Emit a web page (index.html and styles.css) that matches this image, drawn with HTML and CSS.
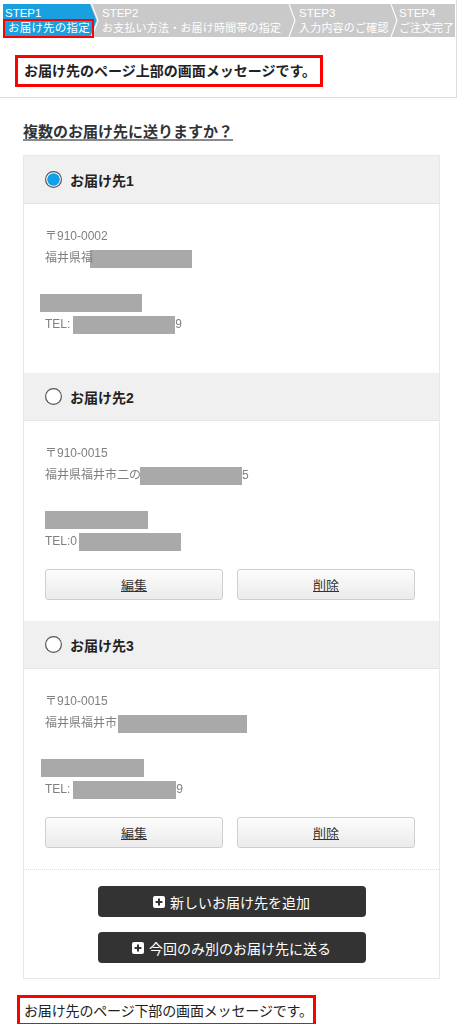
FILE: index.html
```html
<!DOCTYPE html>
<html lang="ja">
<head>
<meta charset="utf-8">
<title>お届け先の指定</title>
<link rel="stylesheet" href="styles.css">
</head>
<body>
<header class="top">
  <ol class="steps">
    <li class="step step-current"><span class="step-no">STEP1</span><span class="step-name">お届け先の指定</span></li>
    <li class="sep-wrap"><svg class="sep" width="9" height="33" viewBox="0 0 9 33"><polygon points="0,0 6.5,16.5 0,33" fill="#1a9fe0"/><polyline points="1.6,0 8,16.5 1.6,33" fill="none" stroke="#fff" stroke-width="1.1"/></svg></li>
    <li class="step step-2"><span class="step-no">STEP2</span><span class="step-name">お支払い方法・お届け時間帯の指定</span></li>
    <li class="sep-wrap"><svg class="sep" width="8" height="33" viewBox="0 0 8 33"><polyline points="1,0 7,16.5 1,33" fill="none" stroke="#fff" stroke-width="1.1"/></svg></li>
    <li class="step step-3"><span class="step-no">STEP3</span><span class="step-name">入力内容のご確認</span></li>
    <li class="sep-wrap"><svg class="sep" width="8" height="33" viewBox="0 0 8 33"><polyline points="1,0 7,16.5 1,33" fill="none" stroke="#fff" stroke-width="1.1"/></svg></li>
    <li class="step step-4"><span class="step-no">STEP4</span><span class="step-name">ご注文完了</span></li>
  </ol>
  <p class="msg msg-top">お届け先のページ上部の画面メッセージです。</p>
</header>

<main class="main">
  <h2 class="question"><span>複数のお届け先に送りますか？</span></h2>

  <section class="card">
    <div class="addr-head">
      <svg class="radio" width="17" height="17" viewBox="0 0 17 17"><circle cx="8.5" cy="8.5" r="7.9" fill="#fff" stroke="#555" stroke-width="1.2"/><circle cx="8.5" cy="8.5" r="6.3" fill="#12a0ea"/></svg>
      <span>お届け先1</span>
    </div>
    <div class="addr-body">
      <div class="addr">
        <p><span class="blur">〒910-0002</span></p>
        <p><span class="blur">福井県福</span><span class="redact r1a"></span></p>
        <p>&nbsp;</p>
        <p><span class="redact r1b"></span></p>
        <p><span class="blur">TEL:</span><span class="redact r1c"></span><span class="blur">9</span></p>
      </div>
    </div>

    <div class="addr-head">
      <svg class="radio" width="17" height="17" viewBox="0 0 17 17"><circle cx="8.5" cy="8.5" r="7.9" fill="#fff" stroke="#555" stroke-width="1.2"/></svg>
      <span>お届け先2</span>
    </div>
    <div class="addr-body">
      <div class="addr">
        <p><span class="blur">〒910-0015</span></p>
        <p><span class="blur">福井県福井市二の</span><span class="redact r2a"></span><span class="blur">5</span></p>
        <p>&nbsp;</p>
        <p><span class="redact r2b"></span></p>
        <p><span class="blur">TEL:0</span><span class="redact r2c"></span></p>
      </div>
      <div class="btn-row">
        <a class="btn-light" href="#">編集</a>
        <a class="btn-light" href="#">削除</a>
      </div>
    </div>

    <div class="addr-head">
      <svg class="radio" width="17" height="17" viewBox="0 0 17 17"><circle cx="8.5" cy="8.5" r="7.9" fill="#fff" stroke="#555" stroke-width="1.2"/></svg>
      <span>お届け先3</span>
    </div>
    <div class="addr-body">
      <div class="addr">
        <p><span class="blur">〒910-0015</span></p>
        <p><span class="blur">福井県福井市</span><span class="redact r3a"></span></p>
        <p>&nbsp;</p>
        <p><span class="redact r3b"></span></p>
        <p><span class="blur">TEL:</span><span class="redact r3c"></span><span class="blur">9</span></p>
      </div>
      <div class="btn-row">
        <a class="btn-light" href="#">編集</a>
        <a class="btn-light" href="#">削除</a>
      </div>
    </div>

    <div class="card-foot">
      <a class="btn-dark" href="#"><svg class="plus" width="12" height="12" viewBox="0 0 12 12"><rect width="12" height="12" rx="2" fill="#fff"/><path d="M6 2.6v6.8M2.6 6h6.8" stroke="#333" stroke-width="2"/></svg><span>新しいお届け先を追加</span></a>
      <a class="btn-dark" href="#"><svg class="plus" width="12" height="12" viewBox="0 0 12 12"><rect width="12" height="12" rx="2" fill="#fff"/><path d="M6 2.6v6.8M2.6 6h6.8" stroke="#333" stroke-width="2"/></svg><span>今回のみ別のお届け先に送る</span></a>
    </div>
  </section>
</main>

<p class="msg msg-bottom">お届け先のページ下部の画面メッセージです。</p>
</body>
</html>
```

FILE: styles.css
```css
body {
  margin: 0;
  font-family: "Liberation Sans", "Noto Sans CJK JP", sans-serif;
  color: #222;
  background: #fff;
}

.top {
  width: 457px;
  box-sizing: border-box;
  border-right: 1px solid #ddd;
  border-bottom: 1px solid #ddd;
  padding: 4px 0 10px;
  display: flex;
  flex-direction: column;
  align-items: flex-start;
}

.steps {
  display: flex;
  list-style: none;
  margin: 0 0 0 3px;
  padding: 0;
  height: 33px;
  width: 452px;
  background: #c9c9c9;
}

.step {
  display: flex;
  flex-direction: column;
  color: #fff;
  font-size: 11px;
  letter-spacing: 0.2px;
  white-space: nowrap;
  padding-top: 3px;
  box-sizing: border-box;
  flex: none;
}

.step-no {
  line-height: 12px;
  padding-left: 3px;
  font-size: 11.5px;
  letter-spacing: 0;
}

.step-name {
  line-height: 15px;
  border: 2px solid transparent;
  padding-left: 1px;
}

.step-current {
  background: #1a9fe0;
  width: 87px;
}

.step-current .step-no {
  padding-left: 2px;
}

.step-current .step-name {
  border-color: #f00;
  width: 91px;
  box-sizing: border-box;
  padding-left: 3px;
  position: relative;
  z-index: 1;
  font-size: 11.5px;
}

.step-2 { width: 189px; }
.step-3 { width: 94px; }
.step-4 { flex: 1; min-width: 0; letter-spacing: 0; }
.step-4 .step-no { padding-left: 1px; }
.step-4 .step-name { border-left: 0; padding-left: 1px; }

.sep-wrap {
  flex: none;
  display: flex;
}

.sep {
  display: block;
}

.msg {
  margin: 0;
  border: 3px solid #f00;
  font-size: 14px;
  width: fit-content;
  white-space: nowrap;
}

.msg-top {
  margin: 18px 0 0 15px;
  padding: 0 4px 0 6px;
  font-weight: bold;
  line-height: 26px;
}

.main {
  margin: 24px 0 0 23px;
  width: 417px;
}

.question {
  margin: 0 0 13px;
  font-size: 15px;
  font-weight: bold;
  line-height: 20px;
  color: #333;
}

.question span {
  text-decoration: underline;
  text-decoration-color: #8a8a8a;
  text-decoration-thickness: 2px;
  text-underline-offset: 2px;
}

.card {
  border: 1px solid #e8e8e8;
}

.addr-head {
  height: 47px;
  background: #f0f0f0;
  border-bottom: 1px solid #e4e4e4;
  display: flex;
  align-items: center;
  gap: 8px;
  padding-left: 21px;
  font-size: 14px;
  font-weight: bold;
  color: #222;
}

.radio {
  display: block;
  flex: none;
}

.addr-body {
  padding: 21px 24px 21px 21px;
}

.addr {
  font-size: 12px;
  line-height: 22px;
  color: #808080;
  margin-bottom: 17px;
}

.addr p {
  margin: 0;
  height: 22px;
  white-space: nowrap;
}

.blur {
  filter: blur(0.7px);
  display: inline-block;
}

.redact {
  display: inline-block;
  height: 18px;
  background: #a9a9a9;
  vertical-align: middle;
}

.r1a { width: 102px; margin-left: -3px; }
.r1b { width: 102px; margin-left: -5px; }
.r1c { width: 102px; margin-left: 3px; }
.r2a { width: 102px; margin-left: -1px; }
.r2b { width: 103px; margin-left: 0; }
.r2c { width: 102px; margin-left: 2px; }
.r3a { width: 129px; margin-left: 1px; }
.r3b { width: 103px; margin-left: -4px; }
.r3c { width: 103px; margin-left: 3px; }

.btn-row {
  display: grid;
  grid-template-columns: 178px 178px;
  gap: 14px;
}

.btn-light {
  height: 31px;
  box-sizing: border-box;
  border: 1px solid #cfcfcf;
  border-radius: 3px;
  background: linear-gradient(#fcfcfc, #ebebeb);
  font-size: 13px;
  color: #333;
  text-decoration: underline;
  display: flex;
  align-items: center;
  justify-content: center;
}

.card-foot {
  border-top: 1px dotted #dcdcdc;
  padding: 16px 0 15px;
  display: flex;
  flex-direction: column;
  align-items: center;
  gap: 15px;
}

.btn-dark {
  width: 268px;
  height: 31px;
  box-sizing: border-box;
  background: #333;
  border-radius: 4px;
  color: #fff;
  font-size: 14px;
  text-decoration: none;
  display: flex;
  align-items: center;
  justify-content: center;
  gap: 5px;
}

.plus {
  display: block;
  flex: none;
}

.msg-bottom {
  margin: 16px 0 0 17px;
  padding: 1px 0 0 4px;
  line-height: 24px;
  letter-spacing: -0.15px;
}
```
